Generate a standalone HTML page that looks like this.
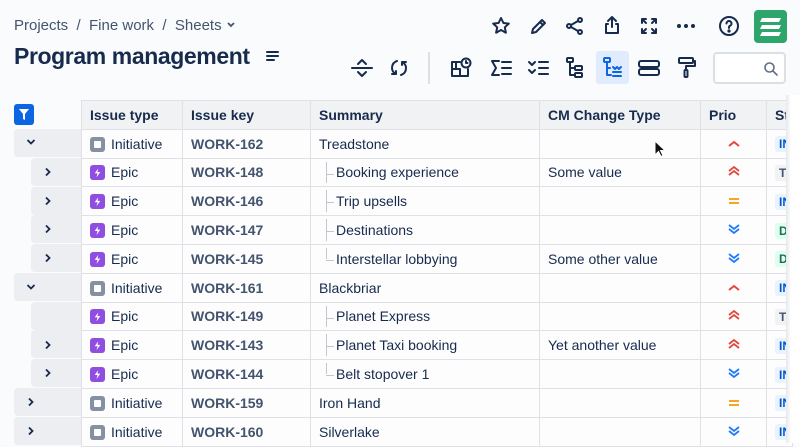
<!DOCTYPE html>
<html><head><meta charset="utf-8"><style>
*{box-sizing:border-box;margin:0;padding:0}
body{width:800px;height:443px;overflow:hidden;background:#fafbfc;font-family:"Liberation Sans",sans-serif;color:#172b4d;position:relative}
.a{position:absolute}
.crumb{left:14px;top:17px;font-size:15px;color:#44546f}
.title{left:14px;top:43px;font-size:23px;font-weight:bold;color:#172b4d;letter-spacing:-0.4px}
svg.i{position:absolute;fill:none;stroke:#172b4d;stroke-width:2;stroke-linecap:round;stroke-linejoin:round}
.logo{left:754px;top:10px;width:33px;height:33px;background:#2ea56a;border-radius:4px}
.search{left:713px;top:52px;width:73px;height:32px;border:2px solid #dcdfe4;border-radius:4px;background:#fff}
.sep{left:428px;top:52px;width:2px;height:32px;background:#dcdfe4}
.hl{left:596px;top:51px;width:33px;height:33px;background:#e0ecfd;border-radius:3px}
.filter{left:14px;top:104px;width:20px;height:21px;background:#0c66e4;border-radius:3px}
table{position:absolute;left:81px;top:100px;border-collapse:collapse;font-size:14px;table-layout:fixed;width:711px}
td,th{border:1px solid #dfe1e6;height:28.8px;padding:0 8px;white-space:nowrap;overflow:hidden;background:#fdfdfe;text-align:left;color:#172b4d}
th{background:#f1f2f4;font-weight:bold;font-size:14px}
td.k{color:#44546f;font-weight:bold}
.ic{display:inline-block;width:15px;height:15px;border-radius:3px;vertical-align:-3px;margin-right:6px;position:relative}
.ini{background:#8590a2}.ini:after{content:"";position:absolute;left:4px;top:4px;width:7px;height:7px;background:#fff;border-radius:1px}
.epi{background:#8f4ee0}
.epi:after{content:"";position:absolute;left:4px;top:3px;width:7px;height:9px;background:#fff;clip-path:polygon(60% 0,10% 55%,50% 55%,35% 100%,90% 40%,50% 40%)}
.tr{position:relative;padding-left:25px}
.tr:before{content:"";position:absolute;left:15px;top:3px;bottom:3px;border-left:1px solid #c1c7d0}
.tr:after{content:"";position:absolute;left:15px;top:15px;width:8px;border-top:1px solid #c1c7d0}
.tr.last:before{bottom:14px}
.p{text-align:center}
.st{display:inline-block;padding:1px 4px;border-radius:3px;font-size:12px;font-weight:bold}
.in{background:#e9f2ff;color:#0055cc}.td{background:#f1f2f4;color:#44546f}.dn{background:#dcfff1;color:#216e4e}
.g{position:absolute;height:28px;background:#eceef1;border-radius:4px 0 0 4px}
.cv{position:absolute}
.shade{left:786px;top:95px;width:14px;height:348px;background:linear-gradient(90deg,#e6e8eb,#fff 5px)}
</style></head><body>
<div class="a crumb">Projects &nbsp;/ &nbsp;Fine work &nbsp;/ &nbsp;Sheets <svg width="10" height="8" style="vertical-align:1px"><path d="M2 2l3 3 3-3" stroke="#44546f" stroke-width="1.8" fill="none"/></svg></div>
<div class="a title">Program management</div>
<svg class="i" style="left:266px;top:49px" width="14" height="14" viewBox="0 0 14 14"><path d="M1 3h11M1 7h11M1 11h7"/></svg>
<svg class="i" style="left:491px;top:16px" width="20" height="20" viewBox="0 0 20 20"><path d="M10 2l2.4 5 5.4.6-4 3.7 1.1 5.4L10 14l-4.9 2.7 1.1-5.4-4-3.7 5.4-.6z"/></svg>
<svg class="i" style="left:529px;top:16px" width="20" height="20" viewBox="0 0 20 20"><path d="M3 17l1-4L13 4l3 3-9 9zM11 6l3 3"/></svg>
<svg class="i" style="left:565px;top:16px" width="20" height="20" viewBox="0 0 20 20"><circle cx="15" cy="4" r="2"/><circle cx="4" cy="10" r="2"/><circle cx="15" cy="16" r="2"/><path d="M6 9l7-4M6 11l7 4"/></svg>
<svg class="i" style="left:602px;top:15px" width="20" height="20" viewBox="0 0 20 20"><path d="M10 12V2M6 6l4-4 4 4M6 9H4v9h12V9h-2"/></svg>
<svg class="i" style="left:639px;top:16px" width="20" height="20" viewBox="0 0 20 20"><path d="M3 7V3h4M13 3h4v4M17 13v4h-4M7 17H3v-4M3 3l4 4M17 3l-4 4M17 17l-4-4M3 17l4-4"/></svg>
<svg class="a" style="left:676px;top:22px" width="20" height="8"><circle cx="3" cy="4" r="2" fill="#172b4d"/><circle cx="10" cy="4" r="2" fill="#172b4d"/><circle cx="17" cy="4" r="2" fill="#172b4d"/></svg>
<svg class="i" style="left:718px;top:15px" width="22" height="22" viewBox="0 0 22 22"><circle cx="11" cy="11" r="9"/><path d="M8.5 8.5a2.5 2.5 0 1 1 3.5 2.3c-.7.3-1 .8-1 1.5v.7"/><circle cx="11" cy="16" r=".6" fill="#172b4d"/></svg>
<div class="a logo"><svg width="33" height="33" viewBox="0 0 33 33"><path d="M8 8h19l-2 4H6zM8 15h19l-2 4H6zM8 22h19l-2 4H6z" fill="#fff"/></svg></div>
<svg class="i" style="left:351px;top:58px" width="22" height="20" viewBox="0 0 22 20"><path d="M1 10h20M7 6l4-4 4 4M7 14l4 4 4-4"/></svg>
<svg class="i" style="left:389px;top:58px" width="20" height="20" viewBox="0 0 20 20"><path d="M8 3C5 4 3 6.5 3 10s2 5 4 6M3 16h4v-3M12 17c3-1 5-3.5 5-7s-2-5-4-6M17 4h-4v3"/></svg>
<div class="a sep"></div>
<svg class="i" style="left:450px;top:57px" width="22" height="22" viewBox="0 0 22 22"><path d="M10 5H2v14h16v-7M2 12h8v7M6 12V5"/><circle cx="16" cy="6" r="4.5"/><path d="M16 4v2h1.5"/></svg>
<svg class="i" style="left:491px;top:59px" width="22" height="18" viewBox="0 0 22 18"><path d="M8 2H1l4 7-4 7h7M11 3h9M11 9h9M11 15h9"/></svg>
<svg class="i" style="left:528px;top:59px" width="22" height="18" viewBox="0 0 22 18"><path d="M1 3l3 3 3-3M1 11l3 3 3-3M11 3h9M11 9h9M11 15h9"/></svg>
<svg class="i" style="left:566px;top:57px" width="18" height="22" viewBox="0 0 18 22"><rect x="1" y="1" width="6" height="4" rx="1"/><path d="M4 5v13h4M4 11h4"/><rect x="9" y="9" width="7" height="4" rx="1"/><rect x="9" y="16" width="7" height="4" rx="1"/></svg>
<div class="a hl"></div>
<svg class="i" style="left:603px;top:57px;stroke:#0c66e4" width="20" height="22" viewBox="0 0 20 22"><rect x="1" y="1" width="6" height="4" rx="1"/><path d="M4 5v13h4M4 11h3M10 10l2 2 2-2M10 15h8M10 19h8M14 10l2 2 2-2"/></svg>
<svg class="i" style="left:638px;top:59px" width="22" height="18" viewBox="0 0 22 18"><rect x="1" y="2" width="20" height="6" rx="2"/><rect x="1" y="10" width="20" height="6" rx="2"/></svg>
<svg class="i" style="left:678px;top:57px" width="18" height="22" viewBox="0 0 18 22"><rect x="1" y="1" width="14" height="5" rx="1"/><path d="M15 4h2v5H8v4"/><rect x="6.5" y="13" width="3" height="7" rx="1"/></svg>
<div class="a search"><svg class="i" style="left:48px;top:7px;stroke:#626f86;stroke-width:1.6" width="16" height="16" viewBox="0 0 16 16"><circle cx="6.5" cy="6.5" r="4.5"/><path d="M10 10l4 4"/></svg></div>
<div class="a filter"><svg width="20" height="21" viewBox="0 0 20 21"><path d="M5 5h10l-4 5v6l-2-1v-5z" fill="#fff"/></svg></div>
<div class="g" style="left:14px;top:129px;width:67px"></div><svg class="cv" style="left:26px;top:138px" width="10" height="8"><path d="M1.5 2l3.5 3.5 3.5-3.5" stroke="#172b4d" stroke-width="1.8" fill="none"/></svg>
<div class="g" style="left:31px;top:158px;width:50px"></div><svg class="cv" style="left:44px;top:167px" width="8" height="10"><path d="M2 1.5l3.5 3.5-3.5 3.5" stroke="#172b4d" stroke-width="1.8" fill="none"/></svg>
<div class="g" style="left:31px;top:187px;width:50px"></div><svg class="cv" style="left:44px;top:196px" width="8" height="10"><path d="M2 1.5l3.5 3.5-3.5 3.5" stroke="#172b4d" stroke-width="1.8" fill="none"/></svg>
<div class="g" style="left:31px;top:215px;width:50px"></div><svg class="cv" style="left:44px;top:224px" width="8" height="10"><path d="M2 1.5l3.5 3.5-3.5 3.5" stroke="#172b4d" stroke-width="1.8" fill="none"/></svg>
<div class="g" style="left:31px;top:244px;width:50px"></div><svg class="cv" style="left:44px;top:253px" width="8" height="10"><path d="M2 1.5l3.5 3.5-3.5 3.5" stroke="#172b4d" stroke-width="1.8" fill="none"/></svg>
<div class="g" style="left:14px;top:273px;width:67px"></div><svg class="cv" style="left:26px;top:283px" width="10" height="8"><path d="M1.5 2l3.5 3.5 3.5-3.5" stroke="#172b4d" stroke-width="1.8" fill="none"/></svg>
<div class="g" style="left:31px;top:302px;width:50px"></div>
<div class="g" style="left:31px;top:330px;width:50px"></div><svg class="cv" style="left:44px;top:340px" width="8" height="10"><path d="M2 1.5l3.5 3.5-3.5 3.5" stroke="#172b4d" stroke-width="1.8" fill="none"/></svg>
<div class="g" style="left:31px;top:359px;width:50px"></div><svg class="cv" style="left:44px;top:368px" width="8" height="10"><path d="M2 1.5l3.5 3.5-3.5 3.5" stroke="#172b4d" stroke-width="1.8" fill="none"/></svg>
<div class="g" style="left:14px;top:388px;width:67px"></div><svg class="cv" style="left:27px;top:397px" width="8" height="10"><path d="M2 1.5l3.5 3.5-3.5 3.5" stroke="#172b4d" stroke-width="1.8" fill="none"/></svg>
<div class="g" style="left:14px;top:417px;width:67px"></div><svg class="cv" style="left:27px;top:426px" width="8" height="10"><path d="M2 1.5l3.5 3.5-3.5 3.5" stroke="#172b4d" stroke-width="1.8" fill="none"/></svg>
<table>
<colgroup><col style="width:101px"><col style="width:128px"><col style="width:229px"><col style="width:161px"><col style="width:66px"><col style="width:26px"></colgroup>
<tr><th>Issue type</th><th>Issue key</th><th>Summary</th><th>CM Change Type</th><th>Prio</th><th>St</th></tr>
<tr><td><span class="ic ini"></span>Initiative</td><td class="k">WORK-162</td><td>Treadstone</td><td></td><td class="p"><svg width="14" height="10"><path d="M2 7l5-4 5 4" stroke="#e2483d" stroke-width="2" fill="none"/></svg></td><td><span class="st in">IN</span></td></tr>
<tr><td><span class="ic epi"></span>Epic</td><td class="k">WORK-148</td><td class="tr">Booking experience</td><td>Some value</td><td class="p"><svg width="14" height="12"><path d="M2 6l5-4 5 4M2 10l5-4 5 4" stroke="#e2483d" stroke-width="1.8" fill="none"/></svg></td><td><span class="st td">T</span></td></tr>
<tr><td><span class="ic epi"></span>Epic</td><td class="k">WORK-146</td><td class="tr">Trip upsells</td><td></td><td class="p"><svg width="14" height="10"><path d="M2 3h10M2 7h10" stroke="#f5a623" stroke-width="2"/></svg></td><td><span class="st in">IN</span></td></tr>
<tr><td><span class="ic epi"></span>Epic</td><td class="k">WORK-147</td><td class="tr">Destinations</td><td></td><td class="p"><svg width="14" height="12"><path d="M2 2l5 4 5-4M2 6l5 4 5-4" stroke="#1d7afc" stroke-width="1.8" fill="none"/></svg></td><td><span class="st dn">D</span></td></tr>
<tr><td><span class="ic epi"></span>Epic</td><td class="k">WORK-145</td><td class="tr last">Interstellar lobbying</td><td>Some other value</td><td class="p"><svg width="14" height="12"><path d="M2 2l5 4 5-4M2 6l5 4 5-4" stroke="#1d7afc" stroke-width="1.8" fill="none"/></svg></td><td><span class="st dn">D</span></td></tr>
<tr><td><span class="ic ini"></span>Initiative</td><td class="k">WORK-161</td><td>Blackbriar</td><td></td><td class="p"><svg width="14" height="10"><path d="M2 7l5-4 5 4" stroke="#e2483d" stroke-width="2" fill="none"/></svg></td><td><span class="st in">IN</span></td></tr>
<tr><td><span class="ic epi"></span>Epic</td><td class="k">WORK-149</td><td class="tr">Planet Express</td><td></td><td class="p"><svg width="14" height="12"><path d="M2 6l5-4 5 4M2 10l5-4 5 4" stroke="#e2483d" stroke-width="1.8" fill="none"/></svg></td><td><span class="st td">T</span></td></tr>
<tr><td><span class="ic epi"></span>Epic</td><td class="k">WORK-143</td><td class="tr">Planet Taxi booking</td><td>Yet another value</td><td class="p"><svg width="14" height="12"><path d="M2 6l5-4 5 4M2 10l5-4 5 4" stroke="#e2483d" stroke-width="1.8" fill="none"/></svg></td><td><span class="st in">IN</span></td></tr>
<tr><td><span class="ic epi"></span>Epic</td><td class="k">WORK-144</td><td class="tr last">Belt stopover 1</td><td></td><td class="p"><svg width="14" height="12"><path d="M2 2l5 4 5-4M2 6l5 4 5-4" stroke="#1d7afc" stroke-width="1.8" fill="none"/></svg></td><td><span class="st in">IN</span></td></tr>
<tr><td><span class="ic ini"></span>Initiative</td><td class="k">WORK-159</td><td>Iron Hand</td><td></td><td class="p"><svg width="14" height="10"><path d="M2 3h10M2 7h10" stroke="#f5a623" stroke-width="2"/></svg></td><td><span class="st in">IN</span></td></tr>
<tr><td><span class="ic ini"></span>Initiative</td><td class="k">WORK-160</td><td>Silverlake</td><td></td><td class="p"><svg width="14" height="12"><path d="M2 2l5 4 5-4M2 6l5 4 5-4" stroke="#1d7afc" stroke-width="1.8" fill="none"/></svg></td><td><span class="st in">IN</span></td></tr>
</table>
<div class="a shade"></div>
<svg class="a" style="left:654px;top:140px" width="12" height="18" viewBox="0 0 12 18"><path d="M1 1v14l3.5-3.5 2.5 5 2-1-2.5-5H11z" fill="#111" stroke="#fff" stroke-width="1"/></svg>
</body></html>
